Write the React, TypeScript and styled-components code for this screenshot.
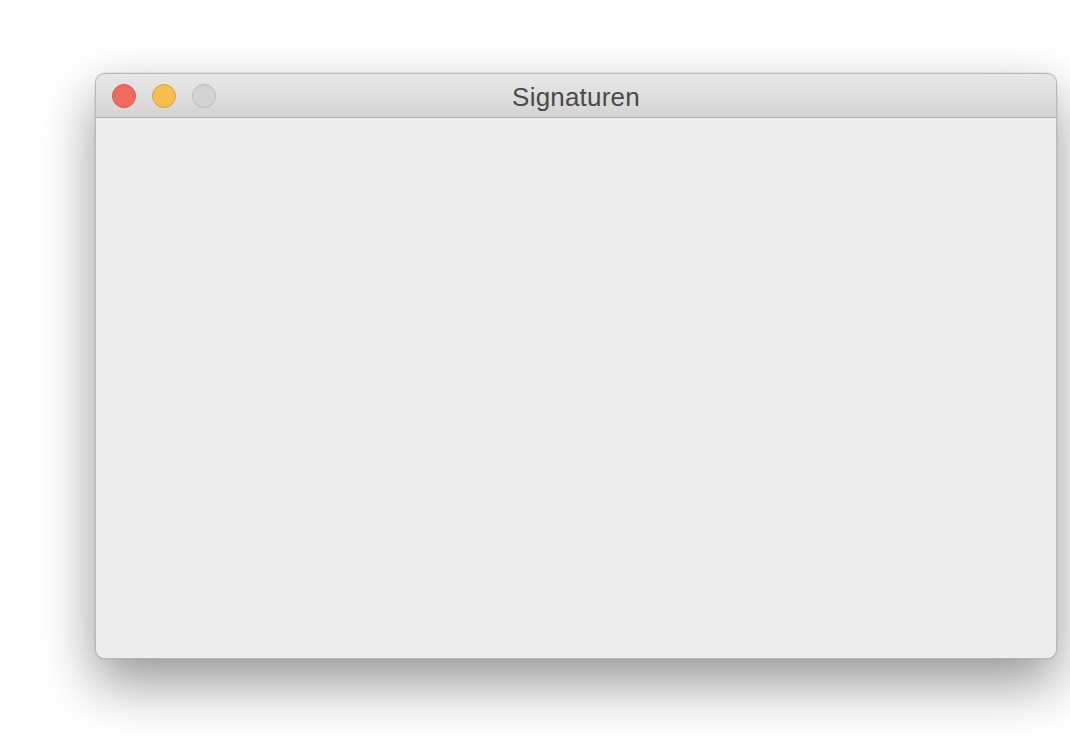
import React from "react";
import styled, { createGlobalStyle } from "styled-components";

const Global = createGlobalStyle`
  html, body { margin: 0; padding: 0; background: #ffffff; }
  body { font-family: "Liberation Sans", Arial, sans-serif; }
`;

const Page = styled.div`
  width: 1070px;
  height: 738px;
  box-sizing: border-box;
  padding: 73px 0 0 95px;
  overflow: hidden;
  background: #ffffff;
`;

const Window = styled.div`
  width: 962px;
  height: 586px;
  box-sizing: border-box;
  display: flex;
  flex-direction: column;
  border: 1px solid #b9b9b9;
  border-radius: 10px;
  overflow: hidden;
  background: #ececec;
  box-shadow: 0 24px 55px rgba(0, 0, 0, 0.42), 0 0 0 0.5px rgba(0, 0, 0, 0.1);
`;

const TitleBar = styled.div`
  position: relative;
  height: 43px;
  flex: 0 0 auto;
  display: flex;
  align-items: center;
  justify-content: center;
  background: linear-gradient(#e8e8e8, #d3d3d3);
  border-bottom: 1px solid #afafaf;
`;

const Lights = styled.div`
  position: absolute;
  left: 16px;
  top: 10px;
  display: flex;
  gap: 16px;
`;

const Light = styled.span<{ $fill: string; $stroke: string }>`
  width: 24px;
  height: 24px;
  box-sizing: border-box;
  border-radius: 50%;
  background: ${(p) => p.$fill};
  border: 1px solid ${(p) => p.$stroke};
`;

const Title = styled.div`
  font-size: 26px;
  color: #4a4a4a;
  letter-spacing: 0.2px;
  line-height: 1;
  margin-top: 3px;
`;

const Content = styled.div`
  flex: 1;
  background: #ececec;
`;

export default function App() {
  return (
    <>
      <Global />
      <Page>
        <Window>
          <TitleBar>
            <Lights>
              <Light $fill="#ee6a5f" $stroke="#d5574d" />
              <Light $fill="#f6be50" $stroke="#d9a23c" />
              <Light $fill="#d3d3d3" $stroke="#bcbcbc" />
            </Lights>
            <Title>Signaturen</Title>
          </TitleBar>
          <Content />
        </Window>
      </Page>
    </>
  );
}
